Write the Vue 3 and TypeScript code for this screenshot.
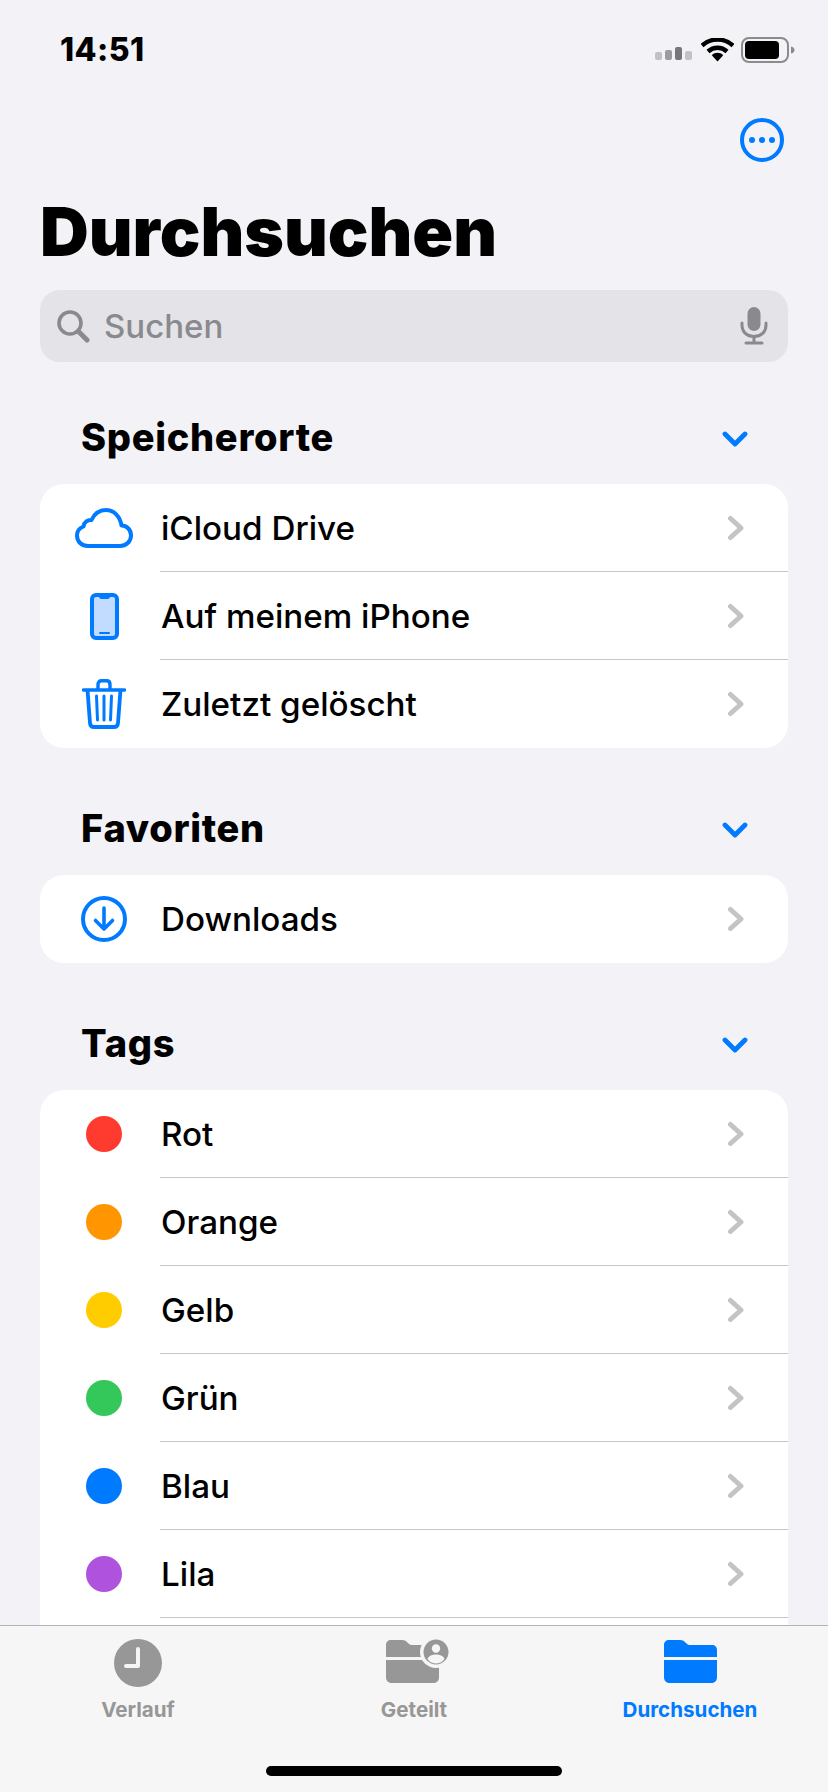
<script setup lang="ts">
interface Row { label: string; icon?: string; color?: string }
const locations: Row[] = [
  { label: 'iCloud Drive', icon: 'cloud' },
  { label: 'Auf meinem iPhone', icon: 'phone' },
  { label: 'Zuletzt gelöscht', icon: 'trash' },
]
const favorites: Row[] = [{ label: 'Downloads', icon: 'download' }]
const tags: Row[] = [
  { label: 'Rot', color: '#ff3b30' },
  { label: 'Orange', color: '#ff9500' },
  { label: 'Gelb', color: '#ffcc00' },
  { label: 'Grün', color: '#34c759' },
  { label: 'Blau', color: '#007aff' },
  { label: 'Lila', color: '#af52de' },
  { label: 'Grau', color: '#8e8e93' },
]
const sections = [
  { title: 'Speicherorte', rows: locations },
  { title: 'Favoriten', rows: favorites },
  { title: 'Tags', rows: tags },
]
</script>

<template>
  <div class="screen">
    <div class="status">
      <span class="time">14:51</span>
      <div class="status-icons">
        <svg class="signal" width="38" height="14" viewBox="0 0 38 14">
          <rect x="0" y="5" width="7" height="8" rx="2" fill="#c2c2c4" />
          <rect x="10" y="3" width="7" height="10" rx="2" fill="#9c9c9e" />
          <rect x="20" y="0" width="7" height="13" rx="2" fill="#77777a" />
          <rect x="30" y="4" width="7" height="9" rx="2" fill="#c2c2c4" />
        </svg>
        <svg class="wifi" width="33" height="24" viewBox="0 0 33 24">
          <path d="M1 7.5C10 -0.5 23 -0.5 32 7.5" fill="none" stroke="#000" stroke-width="4.4" />
          <path d="M7 13.5C12.5 8.5 20.5 8.5 26 13.5" fill="none" stroke="#000" stroke-width="4.4" />
          <path d="M10.8 17.2C14 14 19 14 22.2 17.2L16.5 23.5Z" fill="#000" />
        </svg>
        <svg width="54" height="26" viewBox="0 0 54 26">
          <rect x="1" y="1" width="46" height="24" rx="7" fill="none" stroke="#8b8b8d" stroke-width="2" />
          <rect x="4" y="4" width="34" height="18" rx="4" fill="#000" />
          <path d="M50 9.5C52.5 10 53.5 11.5 53.5 13S52.5 16 50 16.5Z" fill="#8b8b8d" />
        </svg>
      </div>
    </div>

    <div class="nav">
      <svg width="44" height="44" viewBox="0 0 44 44">
        <circle cx="22" cy="22" r="20" fill="none" stroke="#007aff" stroke-width="4" />
        <circle cx="12" cy="22" r="3" fill="#007aff" />
        <circle cx="22" cy="22" r="3" fill="#007aff" />
        <circle cx="32" cy="22" r="3" fill="#007aff" />
      </svg>
    </div>

    <h1 class="title">Durchsuchen</h1>

    <div class="search">
      <svg width="34" height="34" viewBox="0 0 34 34">
        <circle cx="14" cy="14" r="11" fill="none" stroke="#8a8a8e" stroke-width="3.6" />
        <path d="M22.5 22.5L31 31" stroke="#8a8a8e" stroke-width="5" stroke-linecap="round" />
      </svg>
      <span class="placeholder">Suchen</span>
      <svg class="mic" width="28" height="38" viewBox="0 0 28 38">
        <rect x="7.5" y="0" width="13" height="24" rx="6.5" fill="#8a8a8e" />
        <path d="M2 16V18C2 25 7 29.5 14 29.5S26 25 26 18V16" fill="none" stroke="#8a8a8e" stroke-width="3" stroke-linecap="round" />
        <path d="M14 29.5V35M6 36H22" stroke="#8a8a8e" stroke-width="3" stroke-linecap="round" />
      </svg>
    </div>

    <section v-for="s in sections" :key="s.title" class="section">
      <div class="section-head">
        <h2>{{ s.title }}</h2>
        <svg class="collapse" width="26" height="16" viewBox="0 0 26 16">
          <path d="M3 3L13 13L23 3" fill="none" stroke="#007aff" stroke-width="4.8" stroke-linecap="round" stroke-linejoin="round" />
        </svg>
      </div>
      <div class="card">
        <div v-for="r in s.rows" :key="r.label" class="row">
          <div class="row-icon">
            <span v-if="r.color" class="dot" :style="{ background: r.color }"></span>
            <svg v-else-if="r.icon === 'cloud'" width="58" height="40" viewBox="0 0 58 40">
              <path d="M13 38H45C51 38 56 33.500 56 27.500C56 21.500 51.500 17.500 46.500 17.500C45 8.500 39 2 31 2C24.500 2 19.500 5.500 16.500 12C13 11.500 9 14 8.500 18.500C4.500 20 2 23.500 2 27.500C2 33.500 6.500 38 13 38Z" fill="#fff" stroke="#007aff" stroke-width="4" stroke-linejoin="round" />
            </svg>
            <svg v-else-if="r.icon === 'phone'" width="29" height="47" viewBox="0 0 29 47">
              <rect x="2" y="2" width="25" height="43" rx="4" fill="#c1dcff" stroke="#007aff" stroke-width="4" />
              <path d="M9 2H20V3.500C20 5 19 6 17.500 6H11.500C10 6 9 5 9 3.500Z" fill="#007aff" />
              <rect x="9" y="39" width="11" height="2" rx="1" fill="#007aff" />
            </svg>
            <svg v-else-if="r.icon === 'trash'" width="44" height="50" viewBox="0 0 44 50">
              <path d="M1.500 11H42.500" stroke="#007aff" stroke-width="3.400" stroke-linecap="round" />
              <path d="M5.500 11L8 44C8.200 46.500 9.500 48 12 48H32C34.500 48 35.800 46.500 36 44L38.500 11" fill="none" stroke="#007aff" stroke-width="3.800" stroke-linejoin="round" />
              <path d="M16 10V5.500C16 3 17.500 1.800 19.500 1.800H24.500C26.500 1.800 28 3 28 5.500V10" fill="none" stroke="#007aff" stroke-width="3.400" />
              <path d="M14.500 17L15.500 41M22 17V41M29.500 17L28.500 41" stroke="#007aff" stroke-width="3" stroke-linecap="round" />
            </svg>
            <svg v-else width="46" height="46" viewBox="0 0 46 46">
              <circle cx="23" cy="23" r="21" fill="none" stroke="#007aff" stroke-width="4" />
              <path d="M23 12V33M14.500 24.500L23 33L31.500 24.500" fill="none" stroke="#007aff" stroke-width="3.600" stroke-linecap="round" stroke-linejoin="round" />
            </svg>
          </div>
          <div class="row-body">
            <span class="label">{{ r.label }}</span>
            <svg class="chevron" width="18" height="26" viewBox="0 0 18 26">
              <path d="M3.500 3.500L14 13L3.500 22.500" fill="none" stroke="#c4c4c6" stroke-width="5" stroke-linecap="round" stroke-linejoin="round" />
            </svg>
          </div>
        </div>
      </div>
    </section>

    <nav class="tabbar">
      <div class="tab">
        <svg width="48" height="48" viewBox="0 0 48 48">
          <circle cx="24" cy="24" r="24" fill="#979797" />
          <path d="M24 10V27H12" fill="none" stroke="#f5f5f5" stroke-width="4" stroke-linecap="round" stroke-linejoin="round" />
        </svg>
        <span>Verlauf</span>
      </div>
      <div class="tab">
        <svg width="66" height="48" viewBox="0 0 66 48">
          <path d="M0 18V6C0 3 2 1 5 1H16C19 1 20 2 22 4C23.500 5.500 24.500 6 26 6H48C51 6 53 8 53 11V18Z" fill="#979797" />
          <path d="M0 21H53V38C53 41.500 51 44 47.500 44H5.500C2 44 0 41.500 0 38Z" fill="#979797" />
          <circle cx="50" cy="13" r="16" fill="#f6f6f6" />
          <circle cx="50" cy="13" r="12.500" fill="#979797" />
          <circle cx="50" cy="9.500" r="4.200" fill="#f6f6f6" />
          <path d="M41.500 20C43 16.500 46.500 15.500 50 15.500S57 16.500 58.500 20C56 23.500 53 24.500 50 24.500S44 23.500 41.500 20Z" fill="#f6f6f6" />
        </svg>
        <span>Geteilt</span>
      </div>
      <div class="tab active">
        <svg width="53" height="48" viewBox="0 0 53 48">
          <path d="M0 18V6C0 3 2 1 5 1H16C19 1 20 2 22 4C23.500 5.500 24.500 6 26 6H48C51 6 53 8 53 11V18Z" fill="#007aff" />
          <path d="M0 21H53V38C53 41.500 51 44 47.500 44H5.500C2 44 0 41.500 0 38Z" fill="#007aff" />
        </svg>
        <span>Durchsuchen</span>
      </div>
      <div class="home"></div>
    </nav>
  </div>
</template>

<style>
html, body { margin: 0; background: #f2f2f7; }
</style>

<style scoped>
.screen {
  position: relative;
  width: 828px;
  height: 1792px;
  overflow: hidden;
  background: #f2f2f7;
  color: #000;
  font-family: Inter, "Liberation Sans", sans-serif;
}
.status {
  height: 88px;
  padding: 12px 30px 0 60px;
  box-sizing: border-box;
  display: flex;
  align-items: center;
  justify-content: space-between;
}
.time { font-size: 32px; font-weight: 800; letter-spacing: 0.4px; line-height: 1; }
.status-icons { display: flex; align-items: center; gap: 7px; margin-right: 3px; }
.signal { margin-top: 8px; margin-right: 1px; }
.nav {
  height: 102px;
  padding: 29px 44px 0 0;
  box-sizing: border-box;
  display: flex;
  justify-content: flex-end;
}
.nav svg { margin-top: 1px; }
.title {
  margin: 0;
  height: 100px;
  padding-left: 40px;
  font-size: 67.5px;
  font-weight: 900;
  line-height: 84px;
  letter-spacing: 0;
}
.search {
  margin: 0 40px;
  height: 72px;
  border-radius: 20px;
  background: #e3e3e8;
  display: flex;
  align-items: center;
  padding: 0 20px 0 16px;
  gap: 14px;
}
.placeholder { flex: 1; font-size: 33px; font-weight: 500; color: #8a8a8e; }
.section-head {
  height: 48px;
  margin-top: 56px;
  margin-bottom: 23px;
  padding: 0 40px 0 81px;
  display: flex;
  align-items: center;
  justify-content: space-between;
}
.section:first-of-type .section-head { margin-top: 51px; }
h2 { margin: 0; font-size: 38px; font-weight: 800; letter-spacing: 0.7px; }
.collapse { margin: 4px 40px 0 0; }
.card {
  margin: 0 40px;
  background: #fff;
  border-radius: 24px;
  overflow: hidden;
}
.row { display: flex; height: 88px; }
.row-icon {
  width: 128px;
  display: flex;
  align-items: center;
  justify-content: center;
}
.row-body {
  flex: 1;
  margin-left: -8px;
  display: flex;
  align-items: center;
  justify-content: space-between;
  padding-right: 43px;
  box-shadow: inset 0 -1px 0 #c6c6c8;
}
.row:last-child .row-body { box-shadow: none; }
.label { font-size: 33.2px; font-weight: 500; margin-left: 1px; }
.dot { width: 36px; height: 36px; border-radius: 50%; }
.tabbar {
  position: absolute;
  left: 0;
  right: 0;
  bottom: 0;
  height: 167px;
  box-sizing: border-box;
  background: #f6f6f6;
  border-top: 1px solid #b4b4b4;
  display: grid;
  grid-template-columns: repeat(3, 276px);
  align-content: start;
  padding-top: 13px;
}
.tab {
  display: flex;
  flex-direction: column;
  align-items: center;
  color: #979797;
  font-size: 20.6px;
  font-weight: 700;
  gap: 11px;
  line-height: 24px;
}
.tab svg { display: block; height: 48px; }
.tab:nth-child(2) svg { margin-left: 9px; }
.tab.active { color: #007aff; }
.home {
  position: absolute;
  left: 266px;
  bottom: 16px;
  width: 296px;
  height: 10px;
  border-radius: 5px;
  background: #000;
}
</style>
